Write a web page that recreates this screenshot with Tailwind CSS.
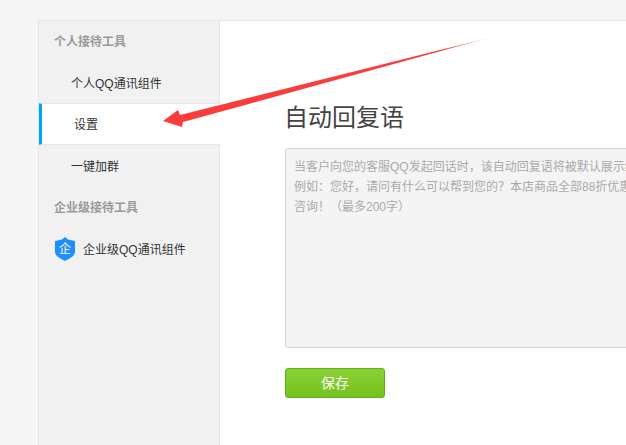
<!DOCTYPE html>
<html lang="zh">
<head>
    <meta charset="UTF-8">
    <title>自动回复语</title>
    <script src="https://cdn.jsdelivr.net/npm/@tailwindcss/browser@4"></script>
</head>
<body class="relative w-[626px] h-[445px] overflow-hidden bg-[#f5f5f5] font-['Liberation_Sans','Noto_Sans_CJK_SC',sans-serif]">
    <div class="flex w-[900px] h-[445px] ml-[38px] mt-5 bg-white border-l border-t border-[#e6e6e6]">
        <!-- Sidebar -->
        <div class="w-[181px] shrink-0 bg-[#f1f1f1] border-r border-[#e6e6e6] text-xs text-[#333]">
            <div class="h-[41px] flex items-center pl-[15px] font-bold text-[#999]">个人接待工具</div>
            <div class="h-[41px] flex items-center pl-8 pt-0.5">个人QQ通讯组件</div>
            <div class="h-[42px] -mr-px flex items-center pl-8 pt-0.5 bg-white border-y border-[#e6e6e6] border-l-[3px] border-l-[#00a2ff]">设置</div>
            <div class="h-[42px] flex items-center pl-8 pt-0.5">一键加群</div>
            <div class="h-[41px] flex items-center pl-[15px] font-bold text-[#999]">企业级接待工具</div>
            <div class="h-[42px] flex items-center pl-4 gap-2">
                <div class="relative w-5 h-6 flex items-center justify-center">
                    <svg class="absolute inset-0" width="20" height="24" viewBox="0 0 20 24">
                        <path d="M10 0 L13 2.5 L20 4 V15 C20 19 14 22 10 24 C6 22 0 19 0 15 V4 L7 2.5 Z" fill="#1e8fff"/>
                    </svg>
                    <span class="relative text-[12px] leading-none text-white">企</span>
                </div>
                <span class="pt-0.5">企业级QQ通讯组件</span>
            </div>
        </div>

        <!-- Main content -->
        <div class="flex-1 pl-[65px] pt-[80px]">
            <h1 class="-ml-px text-2xl leading-[34px] text-[#444]">自动回复语</h1>
            <div class="w-[600px] h-[200px] mt-[13px] px-2 py-2 bg-[#f4f4f4] border border-[#d4d4d4] rounded-[3px] text-xs leading-5 text-[#aaa] whitespace-nowrap">
                <p>当客户向您的客服QQ发起回话时，该自动回复语将被默认展示给客户。</p>
                <p>例如：您好，请问有什么可以帮到您的？本店商品全部88折优惠，欢迎</p>
                <p>咨询！（最多200字）</p>
            </div>
            <button class="block w-[100px] h-[30px] mt-5 rounded-[3px] border border-[#5fae1c] bg-gradient-to-b from-[#8ad132] to-[#74c11f] text-sm text-white">保存</button>
        </div>
    </div>

    <!-- Annotation arrow -->
    <svg class="absolute left-0 top-0" width="626" height="445" viewBox="0 0 626 445">
        <defs>
            <linearGradient id="tail" gradientUnits="userSpaceOnUse" x1="163" y1="121" x2="492" y2="37">
                <stop offset="0.85" stop-color="#fb3c3c"/>
                <stop offset="1" stop-color="#fb3c3c" stop-opacity="0.2"/>
            </linearGradient>
        </defs>
        <polygon points="163,121 178,110 180,115 492,37 183,122 182,127" fill="url(#tail)"/>
    </svg>
</body>
</html>
